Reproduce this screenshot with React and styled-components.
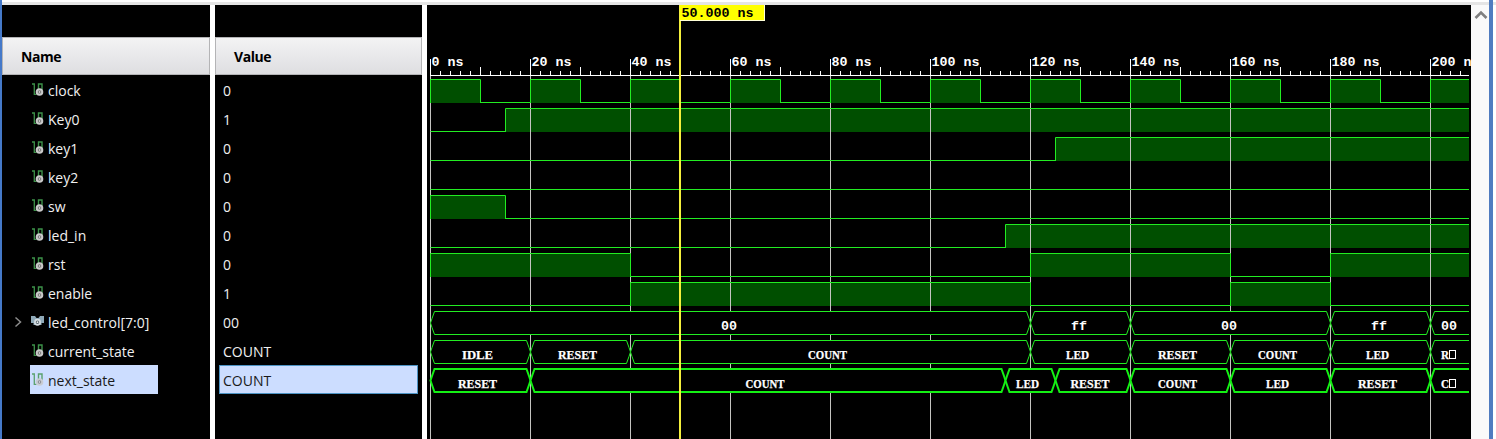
import React from "react";
import styled, { createGlobalStyle, css } from "styled-components";

const GlobalStyle = createGlobalStyle`
  body { margin: 0; background: #fff; overflow: hidden; }
  *, *::before, *::after { box-sizing: border-box; }
`;

const Window = styled.div`
  width: 1496px;
  height: 439px;
  display: flex;
  flex-direction: column;
  background: #fff;
  font-family: "Open Sans", "Noto Sans", sans-serif;
`;

const TopEdge = styled.div`
  height: 5px;
  flex: none;
  border-top: 2px solid #fff;
  background: #e5e5e5;
`;

const Body = styled.div`
  flex: 1;
  display: flex;
  min-height: 0;
  padding-right: 3px;
`;

const Frame = styled.div`
  flex: none;
  width: ${(p) => p.$width}px;
  background: ${(p) => p.$color};
  margin-top: -5px;
`;

const Column = styled.section`
  flex: none;
  width: ${(p) => p.$width}px;
  margin-right: 5px;
  padding-top: 32px;
  background: #000;
`;

const ColumnHeader = styled.header`
  height: 38px;
  padding: 1px 0 0 18px;
  display: flex;
  align-items: center;
  border: 1px solid #b4b4b6;
  background: linear-gradient(#f3f3f4, #dedee1);
  color: #000;
  font-size: 14px;
  font-weight: 700;
  letter-spacing: -0.45px;
`;

const NameRow = styled.div`
  height: 29px;
  display: flex;
  align-items: center;
  padding-left: 9px;
`;

const Expander = styled.div`
  width: 19px;
  height: 29px;
  display: flex;
  align-items: center;
  padding-left: 3px;
`;

const text = css`
  font-size: 14px;
  line-height: 29px;
  white-space: nowrap;
`;

const NameCell = styled.div`
  ${text}
  width: 128px;
  height: 29px;
  display: flex;
  align-items: center;
  padding: 1px 0 0 ${(p) => (p.$bus ? 1 : 2)}px;
  color: ${(p) => (p.$selected ? "#1a1a1a" : "#f0f0f0")};
  background: ${(p) => (p.$selected ? "#ccddff" : "transparent")};

  svg {
    margin-right: 4px;
    opacity: ${(p) => (p.$selected ? 0.8 : 1)};
  }
`;

const ValueCell = styled.div`
  ${text}
  height: 29px;
  margin: 0 4px;
  padding: ${(p) => (p.$selected ? "0 3px" : "1px 4px 0")};
  border: ${(p) => (p.$selected ? "1px solid #4c93c4" : "0")};
  color: ${(p) => (p.$selected ? "#1a1a1a" : "#f0f0f0")};
  background: ${(p) => (p.$selected ? "#ccddff" : "transparent")};
`;

const Plot = styled.svg`
  flex: none;
  display: block;
  background: #000;
`;

const ScrollTrack = styled.div`
  flex: none;
  width: 18px;
  display: flex;
  justify-content: center;
  padding: 5px 0 0 2px;
  background: #fafafa;
`;

const MonoText = styled.text`
  font: 700 13.33px "Liberation Mono", monospace;
  fill: ${(p) => p.$color || "#fff"};
  white-space: pre;
`;

const StateText = styled.text`
  font: 700 12px "Liberation Serif", serif;
  fill: #fff;
  stroke: #fff;
  stroke-width: 0.25px;
`;

const SCALE = 5;
const ORIGIN = 430;
const END = 1469;
const ROW = 29;
const x = (t) => ORIGIN + t * SCALE;
const GREEN = "#22ec22";

const signals = [
  { name: "clock", value: "0", high: [0, 20, 40, 60, 80, 100, 120, 140, 160, 180, 200].map((t) => [t, t + 10]) },
  { name: "Key0", value: "1", high: [[15, 210]] },
  { name: "key1", value: "0", high: [[125, 210]] },
  { name: "key2", value: "0", high: [] },
  { name: "sw", value: "0", high: [[0, 15]] },
  { name: "led_in", value: "0", high: [[115, 210]] },
  { name: "rst", value: "0", high: [[0, 40], [120, 160], [180, 210]] },
  { name: "enable", value: "1", high: [[40, 120], [160, 180]] },
  { name: "led_control[7:0]", value: "00", numeric: true, bus: [[0, "00"], [120, "ff"], [140, "00"], [180, "ff"], [200, "00"]] },
  { name: "current_state", value: "COUNT", bus: [[0, "IDLE"], [20, "RESET"], [40, "COUNT"], [120, "LED"], [140, "RESET"], [160, "COUNT"], [180, "LED"], [200, "R□"]] },
  { name: "next_state", value: "COUNT", selected: true, bus: [[0, "RESET"], [20, "COUNT"], [115, "LED"], [125, "RESET"], [140, "COUNT"], [160, "LED"], [180, "RESET"], [200, "C□"]] },
];

function SignalIcon() {
  return (
    <svg width="12" height="14" viewBox="0 0 12 14" fill="none">
      <path d="M0 1H2.300V11.300H4.500" stroke="#3d9249" strokeWidth="1.300" />
      <path d="M6.500 7V1H10V7" stroke="#3d9249" strokeWidth="1.400" />
      <circle cx="7.500" cy="9" r="2.800" stroke="#c9c9c9" strokeWidth="2" fill="#777" />
      <circle cx="7.500" cy="9" r="0.800" fill="#eee" />
    </svg>
  );
}

function BusIcon() {
  return (
    <svg width="13" height="14" viewBox="0 0 13 14" fill="none">
      <path d="M0 1H4L5.500 3H7.500L9 1H13V8H10.500V10H2.500V8H0Z" fill="#8fa9b8" />
      <circle cx="6.500" cy="7.200" r="2.600" fill="#53626b" stroke="#d5dde2" strokeWidth="1.700" />
      <circle cx="6.500" cy="7.200" r="0.900" fill="#eee" />
    </svg>
  );
}

function LogicWave({ high, row }) {
  const top = 79.5 + row * ROW;
  const low = top + 23;
  let d = "";
  let cursor = ORIGIN;
  high.forEach(([a, b]) => {
    const xa = x(a);
    const xb = Math.min(x(b), END);
    if (xa > cursor) d += `M${cursor + 0.5} ${low}H${xa + 0.5}`;
    d += `M${xa + 0.5} ${low + 0.5}V${top}H${xb + (xb < END ? 0.5 : 0)}`;
    if (xb < END) d += `V${low + 0.5}`;
    cursor = xb;
  });
  if (cursor < END) d += `M${cursor + 0.5} ${low}H${END}`;
  return <path d={d} fill="none" stroke={GREEN} />;
}

function LogicFill({ high, row }) {
  return high.map(([a, b]) => (
    <rect key={a} x={x(a)} y={80 + row * ROW} width={Math.min(x(b), END) - x(a)} height="23" fill="#004f00" />
  ));
}

function BusWave({ bus, row, selected, numeric }) {
  const top = (selected ? 79 : 79.5) + row * ROW;
  const bottom = top + 23;
  const mid = top + 11.5;
  return bus.map(([t, label], i) => {
    const last = i === bus.length - 1;
    const a = x(t) + 0.5;
    const b = last ? END : x(bus[i + 1][0]) + 0.5;
    const left = `${a + 4} ${top}L${a + 1.5} ${top + 7}L${a} ${mid}L${a + 1.5} ${bottom - 7}L${a + 4} ${bottom}`;
    const right = last
      ? `H${b}`
      : `H${b - 4}L${b - 1.5} ${bottom - 7}L${b} ${mid}L${b - 1.5} ${top + 7}L${b - 4} ${top}Z`;
    const d = last ? `M${b} ${top}L${left}${right}` : `M${left}${right}`;
    const width = label.length * 8;
    const center = last ? 1449 : (a + b) / 2 - (numeric ? 1.5 : 2.5);
    const y = 98 + row * ROW;
    return (
      <g key={t}>
        <path d={d} fill="#000" stroke={selected ? "#14f014" : GREEN} strokeWidth={selected ? 2 : 1} />
        {numeric && <MonoText x={center - 8} y={y}>{label}</MonoText>}
        {!numeric && !last && (
          <StateText x={center - width / 2} y={y} textLength={width - 1} lengthAdjust="spacingAndGlyphs">
            {label}
          </StateText>
        )}
        {!numeric && last && (
          <>
            <StateText x="1441" y={y} textLength="8" lengthAdjust="spacingAndGlyphs">{label[0]}</StateText>
            <rect x="1449.5" y={y - 8.5} width="6" height="8" fill="none" stroke="#fff" />
          </>
        )}
      </g>
    );
  });
}

function Ruler() {
  const ticks = Array.from({ length: 104 }, (_, i) => i * 2);
  return (
    <g>
      <path d={`M430 75.5H${END}`} stroke="#fff" />
      {ticks.map((t) => (
        <path key={t} d={`M${x(t) + 0.5} ${t % 20 === 0 ? 59 : t % 10 === 0 ? 67 : 71}V75`} stroke="#fff" />
      ))}
      {Array.from({ length: 11 }, (_, i) => (
        <MonoText key={i} x={x(i * 20) + 1.5} y="66">{i === 10 ? "200 n" : `${i * 20} ns`}</MonoText>
      ))}
    </g>
  );
}

function Waveforms() {
  return (
    <Plot width="1044" height="434" viewBox="427 5 1044 434">
      {signals.map((s, i) => s.high && <LogicFill key={s.name} high={s.high} row={i} />)}
      {Array.from({ length: 11 }, (_, i) => (
        <path key={i} d={`M${x(i * 20) + 0.5} 76V439`} stroke="#c4c4c0" />
      ))}
      <Ruler />
      {signals.map((s, i) =>
        s.bus ? (
          <BusWave key={s.name} bus={s.bus} row={i} selected={s.selected} numeric={s.numeric} />
        ) : (
          <LogicWave key={s.name} high={s.high} row={i} />
        )
      )}
      <rect x="679" y="5" width="2" height="434" fill="#f4f03c" />
      <rect x="680" y="5" width="85" height="16" fill="#ffffd8" />
      <rect x="680" y="5" width="84" height="15" fill="#ff0" />
      <MonoText x="681.5" y="17" $color="#000">50.000 ns</MonoText>
    </Plot>
  );
}

export default function App() {
  return (
    <Window>
      <GlobalStyle />
      <TopEdge />
      <Body>
        <Frame $width={2} $color="#4579c9" />
        <Column $width={208}>
          <ColumnHeader>Name</ColumnHeader>
          {signals.map((s) => (
            <NameRow key={s.name}>
              <Expander>
                {s.numeric && (
                  <svg width="8" height="12" viewBox="0 0 8 12">
                    <path d="M1.500 1.500L6.500 6L1.500 10.500" fill="none" stroke="#8c8c8c" strokeWidth="1.500" />
                  </svg>
                )}
              </Expander>
              <NameCell $selected={s.selected} $bus={s.numeric}>
                {s.numeric ? <BusIcon /> : <SignalIcon />}
                <span>{s.name}</span>
              </NameCell>
            </NameRow>
          ))}
        </Column>
        <Column $width={207}>
          <ColumnHeader>Value</ColumnHeader>
          {signals.map((s) => (
            <ValueCell key={s.name} $selected={s.selected}>{s.value}</ValueCell>
          ))}
        </Column>
        <Waveforms />
        <ScrollTrack>
          <svg width="14" height="10" viewBox="0 0 14 10">
            <path d="M1.500 8L7 2.500L12.500 8" fill="none" stroke="#808080" strokeWidth="2.600" />
          </svg>
        </ScrollTrack>
        <Frame $width={4} $color="#507cc0" />
      </Body>
    </Window>
  );
}
